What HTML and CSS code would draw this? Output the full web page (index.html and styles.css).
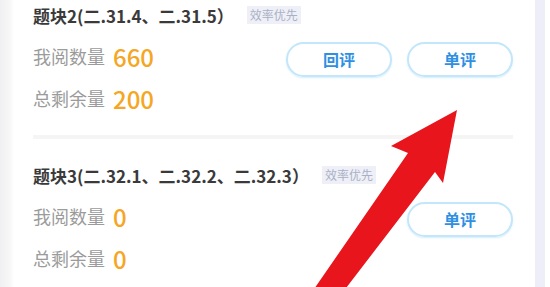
FILE: index.html
```html
<!DOCTYPE html>
<html lang="zh">
	<head>
		<meta charset="UTF-8">
		<meta name="viewport" content="width=device-width, initial-scale=1.0">
		<title>阅卷任务</title>
		<link rel="stylesheet" href="styles.css">
	</head>
	<body>
		<div class="page">
			<div class="side_left"></div>
			<div class="task_card">
				<div class="task_list">
					<div class="task_item">
						<div class="task_title">
							<span class="name">题块2(二.31.4、二.31.5）</span>
							<span class="tag">效率优先</span>
						</div>
						<div class="task_body">
							<div class="stats">
								<div class="stat"><span class="label">我阅数量</span><span class="num">660</span></div>
								<div class="stat"><span class="label">总剩余量</span><span class="num">200</span></div>
							</div>
							<div class="actions">
								<a class="btn" href="javascript:;">回评</a>
								<a class="btn" href="javascript:;">单评</a>
							</div>
						</div>
					</div>
					<div class="task_item">
						<div class="task_title">
							<span class="name">题块3(二.32.1、二.32.2、二.32.3）</span>
							<span class="tag">效率优先</span>
						</div>
						<div class="task_body">
							<div class="stats">
								<div class="stat"><span class="label">我阅数量</span><span class="num">0</span></div>
								<div class="stat"><span class="label">总剩余量</span><span class="num">0</span></div>
							</div>
							<div class="actions">
								<a class="btn" href="javascript:;">单评</a>
							</div>
						</div>
					</div>
				</div>
			</div>
			<div class="side_right"></div>
		</div>
		<!-- 红色箭头标注 -->
		<svg class="arrow" width="550" height="287" viewBox="0 0 550 287">
			<polygon points="457,110 391,146 408,153 312,292 343,292 435,172 443,183" fill="#e8151d"/>
		</svg>
	</body>
</html>
```

FILE: styles.css
```css
* {
	margin: 0;
	padding: 0;
	box-sizing: border-box;
}

body {
	width: 550px;
	height: 287px;
	overflow: hidden;
	background-color: #fff;
	font-family: "Noto Sans CJK SC", "Noto Sans", sans-serif;
	position: relative;
}

.page {
	display: flex;
	height: 287px;
}

.side_left {
	width: 14px;
	background: linear-gradient(to right, #f0f0f2, #f7f7f8 70%, #fff);
}

.task_card {
	flex: 1;
	background-color: #fff;
	padding: 0 22px 0 19px;
	overflow: hidden;
}

.side_right {
	width: 10px;
	margin-right: 5px;
	background-color: #eeeef8;
}

.task_list {
	margin-top: -21px;
}

.task_item {
	padding: 21px 0 16px;
	border-bottom: 4px solid #f5f5f6;
}

.task_title {
	display: flex;
	align-items: center;
	height: 30px;
	margin-bottom: 5px;
}

.task_title .name {
	font-size: 17px;
	font-weight: 600;
	color: #3a3a3a;
}

.task_title .tag {
	margin-left: 13px;
	padding: 0 3px;
	height: 18px;
	line-height: 18px;
	font-size: 12px;
	color: #aab0c6;
	background-color: #eff0f7;
}

.task_body {
	display: flex;
	justify-content: space-between;
	align-items: flex-start;
}

.stat {
	display: flex;
	align-items: center;
	height: 42px;
}

.stat .label {
	font-size: 18px;
	color: #9b9b9b;
}

.stat .num {
	margin-left: 8px;
	font-size: 24px;
	font-weight: 500;
	color: #f5a623;
}

.actions {
	display: flex;
	gap: 15px;
	margin-top: 7px;
}

.btn {
	display: block;
	width: 106px;
	height: 35px;
	line-height: 31px;
	text-align: center;
	border: 2px solid #c3e6fa;
	border-radius: 18px;
	box-shadow: 0 1px 2px #d6eefb;
	font-size: 16px;
	font-weight: 600;
	color: #2f8fe2;
	text-decoration: none;
}

.arrow {
	position: absolute;
	left: 0;
	top: 0;
}
```
